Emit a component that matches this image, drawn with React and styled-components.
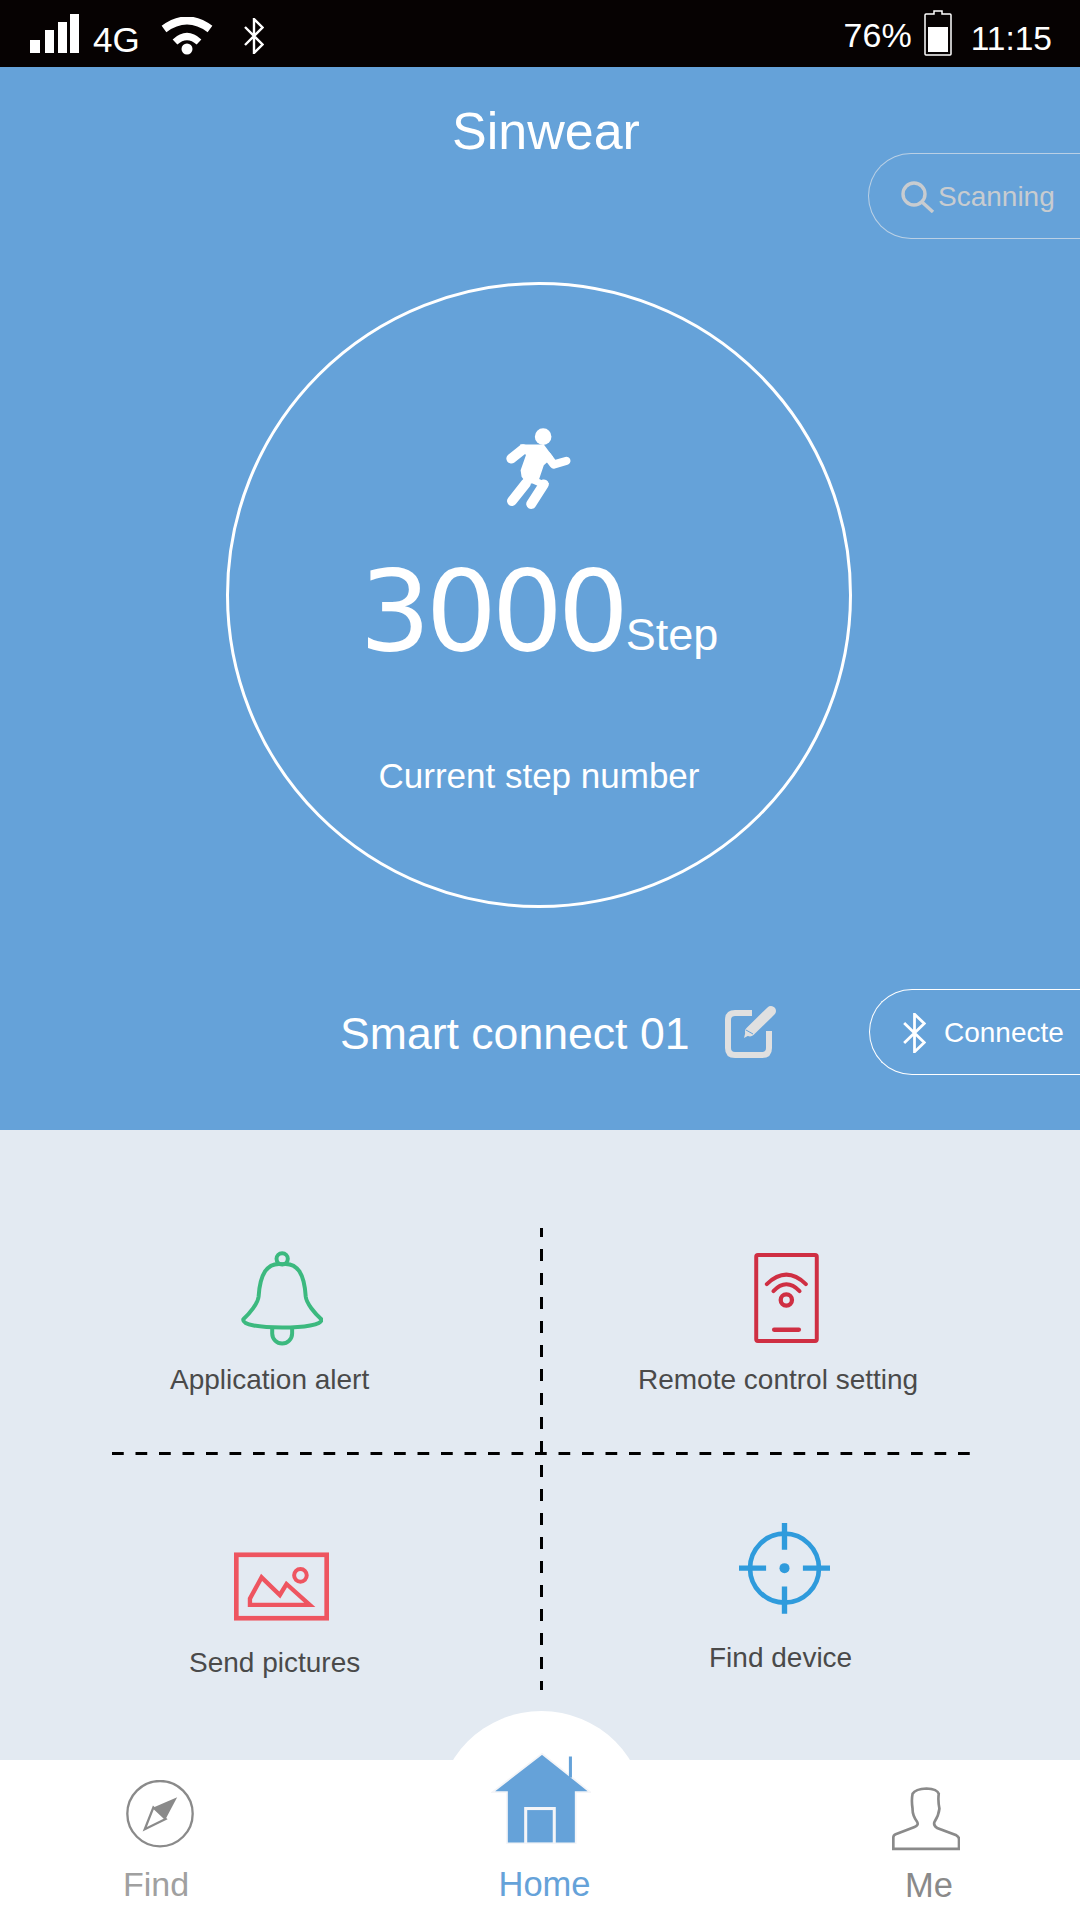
import React from 'react'
import styled, { createGlobalStyle } from 'styled-components'

const blue = '#65a2d9'

const GlobalStyle = createGlobalStyle`
  html, body { margin: 0; padding: 0; background: #fff; }
  * { box-sizing: border-box; }
`

const Page = styled.div`
  width: 1080px;
  height: 1920px;
  overflow: hidden;
  font-family: "Liberation Sans", Arial, sans-serif;
  display: flex;
  flex-direction: column;
`

const StatusBar = styled.div`
  height: 67px;
  background: #060202;
  color: #fff;
  display: flex;
  justify-content: space-between;
  align-items: flex-start;
  padding: 0 28px 0 30px;
`
const StatusGroup = styled.div`
  display: flex;
  align-items: flex-start;
`
const StatusText = styled.span`
  font-size: ${p => p.$size}px;
  line-height: ${p => p.$size}px;
  margin: ${p => p.$top}px ${p => p.$right || 0}px 0 ${p => p.$left || 0}px;
`
const StatusIcon = styled.svg`
  display: block;
  margin: ${p => p.$top}px ${p => p.$right || 0}px 0 ${p => p.$left || 0}px;
`

const Hero = styled.section`
  height: 1063px;
  background: ${blue};
  color: #fff;
  display: flex;
  flex-direction: column;
`
const Title = styled.h1`
  margin: 38px 0 0;
  padding-left: 12px;
  font-size: 52px;
  line-height: 52px;
  font-weight: normal;
  text-align: center;
`
const Pill = styled.div`
  width: 212px;
  height: 86px;
  flex: none;
  border: 1.5px solid ${p => p.$line};
  border-right: none;
  border-radius: 43px 0 0 43px;
  display: flex;
  align-items: center;
  padding: 2px 0 0 ${p => p.$pad}px;
  gap: ${p => p.$gap}px;
  color: ${p => p.$color};
  font-size: 28px;
  white-space: nowrap;
`
const ScanPill = styled(Pill)`
  align-self: flex-end;
  margin-top: -4px;
`
const Circle = styled.div`
  width: 626px;
  height: 626px;
  margin: 43px 0 0 226px;
  border: 3px solid #fff;
  border-radius: 50%;
  padding-top: 142px;
  display: flex;
  flex-direction: column;
  align-items: center;
`
const Count = styled.div`
  display: flex;
  align-items: baseline;
  margin: 45px 0 0 0;
`
const Digits = styled.span`
  font-family: "DejaVu Sans", sans-serif;
  font-size: 112px;
  line-height: 112px;
  letter-spacing: -5.2px;
`
const Unit = styled.span`
  font-size: 45px;
  margin-left: 2px;
`
const Caption = styled.div`
  margin-top: 91px;
  font-size: 35px;
  line-height: 35px;
`
const DeviceRow = styled.div`
  display: flex;
  align-items: center;
  margin-top: 81px;
  padding-left: 340px;
`
const DeviceName = styled.span`
  font-size: 44.6px;
  line-height: 44px;
  width: 385px;
  flex: none;
  padding-top: 4px;
`
const EditIcon = styled.svg`
  display: block;
  flex: none;
  margin-right: 92px;
`

const Panel = styled.section`
  position: relative;
  height: 630px;
  background: #e3eaf2;
  display: grid;
  grid-template-columns: 541px 539px;
  grid-template-rows: 323px 307px;
`
const Tile = styled.div`
  padding: ${p => p.$top}px 0 0 ${p => p.$left}px;
  display: flex;
  flex-direction: column;
  align-items: flex-start;
`
const TileBody = styled.div`
  width: max-content;
  display: flex;
  flex-direction: column;
  align-items: center;
  gap: ${p => p.$gap}px;
  color: #4a4a4a;
  font-size: 28px;
  line-height: 28px;
`
const TileIcon = styled.svg`
  display: block;
  margin-left: ${p => p.$shift}px;
`
const VDivider = styled.div`
  position: absolute;
  left: 540px;
  top: 98px;
  width: 3px;
  height: 462px;
  background: linear-gradient(to bottom, #000 12px, transparent 12px) 0 -3px / 3px 24px repeat-y;
`
const HDivider = styled.div`
  position: absolute;
  left: 112px;
  top: 322px;
  width: 860px;
  height: 3px;
  background: linear-gradient(to right, #000 12px, transparent 12px) 0 0 / 23.5px 3px repeat-x;
`

const Nav = styled.nav`
  position: relative;
  height: 160px;
  background: #fff;
  display: flex;
  justify-content: space-between;
  padding: 0 95px 0 96px;
  &::before {
    content: '';
    position: absolute;
    left: 437px;
    top: -49px;
    width: 209px;
    height: 209px;
    border-radius: 50%;
    background: #fff;
  }
`
const NavItem = styled.div`
  position: relative;
  width: 120px;
  display: flex;
  flex-direction: column;
  align-items: center;
  padding: ${p => p.$top}px 0 0 ${p => p.$pad || 0}px;
  gap: ${p => p.$gap}px;
  color: ${p => p.$color};
  font-size: ${p => p.$size}px;
  line-height: ${p => p.$size}px;
  white-space: nowrap;
`
const NavIcon = styled.svg`
  display: block;
  flex: none;
  margin: ${p => p.$lift || 0}px 0 0 ${p => p.$shift || 0}px;
`

const Bluetooth = ({ width, height }) => (
  <svg width={width} height={height} viewBox="0 0 20 36" preserveAspectRatio="none" style={{ display: 'block', flex: 'none' }}>
    <path d="M1 9 L18.5 26.5 L10 35 V1 L18.5 9.5 L1 27" fill="none" stroke="#fff" strokeWidth="2.4" />
  </svg>
)

export default function App() {
  return (
    <Page>
      <GlobalStyle />
      <StatusBar>
        <StatusGroup>
          <StatusIcon $top={14} width="49" height="39" viewBox="0 0 49 39" fill="#fff">
            <rect x="0" y="26" width="10" height="13" />
            <rect x="15" y="16" width="9" height="23" />
            <rect x="28" y="8" width="9" height="31" />
            <rect x="40" y="0" width="9" height="39" />
          </StatusIcon>
          <StatusText $size={35} $top={22} $left={14}>4G</StatusText>
          <StatusIcon $top={17} $left={21} width="52" height="38" viewBox="0 0 52 38" fill="none" stroke="#fff">
            <path d="M3 12 Q26 -5 49 12" strokeWidth="8" />
            <path d="M14 25 Q26 14 38 25" strokeWidth="7" />
            <circle cx="26" cy="32" r="5.5" fill="#fff" stroke="none" />
          </StatusIcon>
          <StatusIcon as="div" $top={18} $left={31}>
            <Bluetooth width={20} height={36} />
          </StatusIcon>
        </StatusGroup>
        <StatusGroup>
          <StatusText $size={34} $top={18}>76%</StatusText>
          <StatusIcon $top={10} $left={12} $right={19} width="28" height="46" viewBox="0 0 28 46">
            <path d="M10 4 V1 H18 V4 H26 Q27 4 27 5 V44 Q27 45 26 45 H2 Q1 45 1 44 V5 Q1 4 2 4 Z" fill="none" stroke="#fff" strokeWidth="1.5" />
            <rect x="4" y="17" width="20" height="25" fill="#fff" />
          </StatusIcon>
          <StatusText $size={33.5} $top={22}>11:15</StatusText>
        </StatusGroup>
      </StatusBar>

      <Hero>
        <Title>Sinwear</Title>
        <ScanPill $line="rgba(222,228,234,0.7)" $color="#c8ccd0" $pad={31} $gap={2}>
          <svg width="36" height="32" viewBox="0 0 36 32" fill="none" stroke="#c8ccd0" strokeWidth="3.4" style={{ display: 'block', flex: 'none' }}>
            <circle cx="14" cy="13" r="11" />
            <path d="M22 21 L33 31" />
          </svg>
          Scanning
        </ScanPill>
        <Circle>
          <svg width="68" height="83" viewBox="495 75 205 250" fill="#fff" style={{ display: 'block', flex: 'none' }}>
            <circle cx="610" cy="104" r="25" />
            <path d="M540 128 L612 128 L640 165 L612 190 L598 232 L628 245 L612 260 L578 245 L560 245 L545 225 L542 205 L558 160 Z" />
            <g fill="none" stroke="#fff" strokeWidth="30" strokeLinecap="round" strokeLinejoin="round">
              <path d="M514 170 L549 142" />
              <path d="M622 162 L642 188 L680 177" strokeWidth="25" />
              <path d="M558 245 L516 298" />
              <path d="M612 248 L574 307" />
            </g>
          </svg>
          <Count>
            <Digits>3000</Digits>
            <Unit>Step</Unit>
          </Count>
          <Caption>Current step number</Caption>
        </Circle>
        <DeviceRow>
          <DeviceName>Smart connect 01</DeviceName>
          <EditIcon width="52" height="52" viewBox="0 0 52 52">
            <path d="M27 7 H10 Q3 7 3 14 V42 Q3 49 10 49 H37 Q44 49 44 42 V25" fill="none" stroke="#e0e0e0" strokeWidth="6" />
            <path d="M25 25.5 L46 5" stroke="#e0e0e0" strokeWidth="10" strokeLinecap="round" />
            <path d="M19 32 L21 24 L28 27 Z" fill="#e0e0e0" />
            <path d="M21 24 L28 28" stroke={blue} strokeWidth="1" />
          </EditIcon>
          <Pill $line="#fff" $color="#fff" $pad={33} $gap={18}>
            <Bluetooth width={23} height={40} />
            Connecte
          </Pill>
        </DeviceRow>
      </Hero>

      <Panel>
        <Tile $top={121} $left={170}>
          <TileBody $gap={20}>
            <TileIcon $shift={24} width="82" height="95" viewBox="243 93 247 285" fill="none" stroke="#3cb97f" strokeWidth="12">
              <circle cx="367" cy="116" r="17" />
              <path d="M367 132 C320 125 300 165 296 230 C294 250 270 280 250 298 C245 315 300 323 367 323 C430 323 490 315 485 298 C465 280 440 250 438 230 C434 165 415 125 367 132 Z" />
              <path d="M337 323 V341 A30 30 0 0 0 397 341 V323" />
            </TileIcon>
            Application alert
          </TileBody>
        </Tile>
        <Tile $top={123} $left={97}>
          <TileBody $gap={23}>
            <TileIcon $shift={17} width="65" height="90" viewBox="400 98 195 272" fill="none" stroke="#cf2f43" strokeWidth="12">
              <rect x="406" y="104" width="183" height="260" rx="5" />
              <path d="M438 192 Q497 135 556 192" strokeWidth="12" strokeLinecap="round" />
              <path d="M458 213 Q497 172 537 213" strokeWidth="12" strokeLinecap="round" />
              <circle cx="497" cy="240" r="17" strokeWidth="13" />
              <path d="M460 330 H535" strokeWidth="13" strokeLinecap="round" />
            </TileIcon>
            Remote control setting
          </TileBody>
        </Tile>
        <Tile $top={99} $left={189}>
          <TileBody $gap={28}>
            <TileIcon $shift={14} width="95" height="69" viewBox="222 157 286 205" fill="none" stroke="#ee5560" strokeWidth="14">
              <rect x="229" y="164" width="272" height="191" />
              <circle cx="422" cy="226" r="19" strokeWidth="12" />
              <path d="M270 315 V296 L305 232 L360 285 L380 252 L450 315 Z" strokeWidth="13" />
            </TileIcon>
            Send pictures
          </TileBody>
        </Tile>
        <Tile $top={70} $left={168}>
          <TileBody $gap={30}>
            <TileIcon $shift={7} width="91" height="91" viewBox="297 70 272 272" fill="none" stroke="#2f9bdc" strokeWidth="16">
              <circle cx="433" cy="205" r="103" strokeWidth="14" />
              <path d="M433 70 V150 M433 260 V341 M297 205 H378 M488 205 H569" />
              <circle cx="433" cy="205" r="15" fill="#2f9bdc" stroke="none" />
            </TileIcon>
            Find device
          </TileBody>
        </Tile>
        <VDivider />
        <HDivider />
      </Panel>

      <Nav>
        <NavItem $top={20} $gap={19} $color="#a0a0a0" $size={34}>
          <NavIcon $shift={8} width="68" height="68" viewBox="375 240 206 206">
            <circle cx="478" cy="342" r="99" fill="none" stroke="#8a8a8a" strokeWidth="7" />
            <path d="M458 323 L432 389 L495 358 Z" fill="#fff" stroke="#8a8a8a" strokeWidth="7" strokeLinejoin="miter" />
            <path d="M530 292 L458 323 L495 358 Z" fill="#8a8a8a" />
          </NavIcon>
          Find
        </NavItem>
        <NavItem $top={0} $pad={8} $gap={23} $color={blue} $size={34.5}>
          <NavIcon $lift={-8} $shift={-8} width="100" height="92" viewBox="278 190 294 270">
            <path d="M428 195 L570 308 L527 308 L527 458 L325 458 L325 308 L282 308 Z" fill={blue} stroke="#f4f5f8" strokeWidth="5" />
            <rect x="507" y="203" width="9" height="62" fill={blue} />
            <rect x="380" y="356" width="84" height="104" fill={blue} stroke="#f4f5f8" strokeWidth="9" />
          </NavIcon>
          Home
        </NavItem>
        <NavItem $top={27} $pad={8} $gap={17} $color="#8a8a8a" $size={34.5}>
          <NavIcon $shift={-6} width="68" height="64" viewBox="154 80 205 192" fill="none" stroke="#8a8a8a" strokeWidth="8">
            <path d="M158 266 V232 Q158 225 165 222 L222 200 Q235 195 230 185 Q215 165 216 145 Q212 120 216 100 Q225 85 258 84 Q290 85 295 100 Q292 120 297 145 Q295 165 282 185 Q278 195 290 203 L348 225 Q356 230 356 236 V266 Z" />
          </NavIcon>
          Me
        </NavItem>
      </Nav>
    </Page>
  )
}
